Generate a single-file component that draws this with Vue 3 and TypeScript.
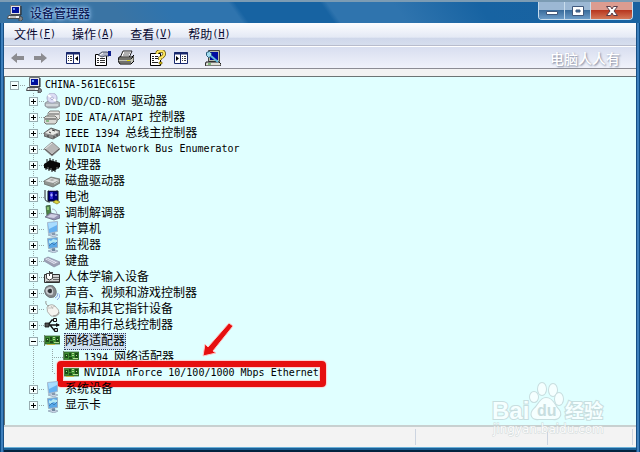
<script setup lang="ts">
import { computed, ref } from 'vue'

interface Shape {
  d: string
  fill?: string
  stroke?: string
  w?: number
}

interface Device {
  label: string
  icon: string
  focused?: boolean
  children?: Device[]
}

const icons: Record<string, Shape[]> = {
  computer: [
    { d: 'M3.500 .500h10v9h-10z', fill: '#e4e4e4', stroke: '#707478' },
    { d: 'M14 1v9H4', stroke: '#202428' },
    { d: 'M5 2h7v6H5z', fill: '#00109c' },
    { d: 'M6 3h2v2H6z', fill: '#6aa0ff' },
    { d: 'M1.500 10.500h11l1 3H.500z', fill: '#f0f0f0', stroke: '#484c50' },
    { d: 'M3 12h6', stroke: '#909090' },
    { d: 'M13 11l2 1 1 2-2 2h-2v-2z', fill: '#808488', stroke: '#303030', w: 0.6 },
  ],
  disc: [
    { d: 'M1 10l3-2h9l3 2v3l-4 2H4l-3-2z', fill: '#aeb4ba', stroke: '#7c8288', w: 0.7 },
    { d: 'M2 12h12', stroke: '#f0f4f6' },
    { d: 'M8 0a5 5 0 1 0 .1 0z', fill: '#dcdcf4', stroke: '#9ca0bc', w: 0.8 },
    { d: 'M8 5L4 2M8 5l4 3', stroke: '#fff', w: 2 },
    { d: 'M8 4a1.3 1.3 0 1 0 .1 0z', fill: '#fff', stroke: '#8c90c0', w: 0.8 },
  ],
  ide: [
    { d: 'M4 4l2-2h9l1 2v5l-2 2H5L4 9z', fill: '#e6e6e2', stroke: '#686864', w: 0.8 },
    { d: 'M5 5h10', stroke: '#585858' },
    { d: 'M0 9l2-2h9l2 2v4l-2 2H2l-2-2z', fill: '#d8d8d4', stroke: '#585854', w: 0.8 },
    { d: 'M1 10h11', stroke: '#404040' },
    { d: 'M2 12h3', stroke: '#3c9c3c' },
  ],
  drive: [
    { d: 'M0 8l7-4 9 2v4l-7 4-9-3z', fill: '#909490', stroke: '#606460', w: 0.7 },
    { d: 'M1 8l6-3 8 2-6 3z', fill: '#dedede' },
    { d: 'M5 7l3-1 3 1-3 1z', fill: '#a8aca8' },
    { d: 'M10 11l5-3', stroke: '#c8ccc8' },
  ],
  firewire: [
    { d: 'M0 8l7-5 9 3v4l-7 4-9-3z', fill: '#8c8c8c', stroke: '#505050', w: 0.8 },
    { d: 'M1 8l6-4 8 3-6 3z', fill: '#e8e8e4' },
    { d: 'M5 7l2 1M8 5l3 1M10 11v2M13 9v2M4 10v2', stroke: '#383838' },
  ],
  diamond: [
    { d: 'M0 8l8-7 8 7-8 7z', fill: '#b8b8b8', stroke: '#808080', w: 0.8 },
    { d: 'M1 8l7 6 7-6', stroke: '#505050' },
    { d: 'M1 8l7-6', stroke: '#e8e8e8' },
  ],
  chip: [
    { d: 'M0 7l6-4 10 3v4l-6 4-10-3z', fill: '#080808' },
    { d: 'M3 2v3M6 1v3M9 2v3M12 3v3M2 10v3M5 11v3M8 12v3M11 12v3M14 9v3', stroke: '#101010' },
    { d: 'M4 10v2M7 11v2M13 10v2', stroke: '#c0c8c8', w: 0.6 },
  ],
  battery: [
    { d: 'M4 2h10v10H4z', fill: '#000080', stroke: '#101018' },
    { d: 'M6 3h3v7H6z', fill: '#302ad0' },
    { d: 'M1 1v8q0 4 5 4', stroke: '#202028' },
    { d: 'M6 6h3M7.500 4.500v3M11 6h2', stroke: '#b0b0ff' },
    { d: 'M5 1h7', stroke: '#e8e8ff' },
    { d: 'M9 13l3-2 4 2-3 2z', fill: '#e0d840', stroke: '#807820', w: 0.7 },
  ],
  modem: [
    { d: 'M2 1l4-1 1 9-4 2z', fill: '#4c8448', stroke: '#385838', w: 0.7 },
    { d: 'M3 2l2 0v3H3z', fill: '#88c070' },
    { d: 'M1 12l5-4 10 2v3l-6 2z', fill: '#9494b4', stroke: '#606078', w: 0.7 },
    { d: 'M3 12l4-3 7 1-4 3z', fill: '#d0d0e4' },
    { d: 'M8 4q4 0 5 5', stroke: '#a8acc0' },
  ],
  monitor: [
    { d: 'M4 14l5-2 5 2-4 2z', fill: '#c8d4e4', stroke: '#8494ac', w: 0.6 },
    { d: 'M8 11h3v3H8z', fill: '#8498ac' },
    { d: 'M3.500 1.500l10-1v10l-9 2z', fill: '#64b0f0', stroke: '#a8b8cc' },
    { d: 'M4 2l9-1v3L5 8z', fill: '#a8dcff' },
  ],
  display: [
    { d: 'M4 14l5-2 5 2-4 2z', fill: '#c8d4e4', stroke: '#8090a8', w: 0.6 },
    { d: 'M8 11h3v3H8z', fill: '#7088a0' },
    { d: 'M3.500 1.500l10-1v10l-9 1z', fill: '#58a8e8', stroke: '#9cb0c4' },
    { d: 'M5 3l2 1 2-2 4 1v3l-4-1-2 2-2-1z', fill: '#b4e8f4' },
    { d: 'M5 9l3-3 2 2 3-3', stroke: '#3c80bc' },
  ],
  keyboard: [
    { d: 'M0 6l4-2 12 5v2l-6 3-10-6z', fill: '#9ca0b4', stroke: '#8084a0', w: 0.6 },
    { d: 'M1 6l3-1 10 4-4 2z', fill: '#e8e8f4' },
    { d: 'M3 6l8 4M5 5l8 4', stroke: '#a0a4bc', w: 0.8 },
  ],
  hid: [
    { d: 'M.500 5.500h15v8H.500z', fill: '#d0d0d0', stroke: '#303030' },
    { d: 'M9 8.500h6M9 10.500h6M2 12.500h13', stroke: '#686868' },
    { d: 'M2.500 4.500h6v5q-3 3-6 0z', fill: '#fff', stroke: '#404040' },
    { d: 'M5.500 2v5M5 3.500h4', stroke: '#404040' },
  ],
  sound: [
    { d: 'M2 2q6-4 9 1t-1 9q-5 2-8-2t0-8z', fill: '#84888c', stroke: '#606468', w: 0.8 },
    { d: 'M3 3q5-3 6 2t-2 5q-4 0-5-3t1-4z', fill: '#c8ccd0' },
    { d: 'M5 4q3-1 3 2t-3 2q-3-2 0-4z', fill: '#303438' },
    { d: 'M11 13q3-1 3-5M13 15q3-2 3-6', stroke: '#8ca4e4' },
  ],
  mouse: [
    { d: 'M3 6q4-4 8-1 5 4 4 8-3 4-8 2-5-4-4-9z', fill: '#f4f4f0', stroke: '#a0a09c', w: 0.8 },
    { d: 'M4 7q3 1 7-2M7 5l2 3', stroke: '#b4b4b0', w: 0.8 },
    { d: 'M5 5Q1 4 2 0', stroke: '#888884', w: 0.9 },
    { d: 'M9 15q5 0 6-4', stroke: '#989894', w: 1 },
  ],
  usb: [
    { d: 'M1 8h14M4 8l4-5h3M6 8l4 5h2', stroke: '#101010', w: 1.3 },
    { d: 'M1 6h4v4H1z', fill: '#505050', stroke: '#101010', w: 0.8 },
    { d: 'M9.500 1.500h3v3h-3z', fill: '#f0f0f0', stroke: '#101010' },
    { d: 'M10.500 11.500h3v3h-3z', fill: '#c0c0c0', stroke: '#101010' },
    { d: 'M12 6l4 2-4 2z', fill: '#101010' },
  ],
  network: [
    { d: 'M1 3h15v8H1z', fill: '#3c8c30', stroke: '#2c5828', w: 0.7 },
    { d: 'M2 5h3v4H2zM6 4h2v3H6zM6 8h3v2H6zM12 4h3v5h-3z', fill: '#1c4c18' },
    { d: 'M9 4.500h2M9 6.500h2M3 6.500h1M10 9.500h5M13 6.500h1', stroke: '#b0dc90' },
    { d: 'M3 11.500h8', stroke: '#c8b848' },
    { d: 'M.500 2v11', stroke: '#688868' },
  ],
  back: [{ d: 'M1 8l6-5v3h7v4H7v3z', fill: '#8c8c90' }],
  forward: [{ d: 'M14 8L8 3v3H1v4h7v3z', fill: '#8c8c90' }],
  paneLeft: [
    { d: 'M1.500 2.500h13v11h-13z', fill: '#fff', stroke: '#18286c' },
    { d: 'M1 3.500h14', stroke: '#18286c', w: 2 },
    { d: 'M8.500 4v9', stroke: '#18286c' },
    { d: 'M3 6.500h1M5 6.500h2M3 8.500h1M5 8.500h2M3 10.500h1M5 10.500h2', stroke: '#404040' },
    { d: 'M13 6v5l-3-2.500z', fill: '#000' },
  ],
  paneRight: [
    { d: 'M1.500 2.500h13v11h-13z', fill: '#fff', stroke: '#18286c' },
    { d: 'M1 3.500h14', stroke: '#18286c', w: 2 },
    { d: 'M7.500 4v9', stroke: '#18286c' },
    { d: 'M9 6.500h1M11 6.500h2M9 8.500h1M11 8.500h2M9 10.500h1M11 10.500h2', stroke: '#404040' },
    { d: 'M3 6v5l3-2.500z', fill: '#000' },
  ],
  properties: [
    { d: 'M.500 4.500h11v11H.500z', fill: '#fff', stroke: '#000' },
    { d: 'M2 8.500h2M5 8.500h5M2 10.500h2M5 10.500h5M2 12.500h2M5 12.500h5', stroke: '#303030' },
    { d: 'M3 5l4-3h5l2 1v3h-4l-3 1z', fill: '#b0b4c4', stroke: '#303848', w: 0.8 },
    { d: 'M13 1h3v5h-3z', fill: '#10208c' },
    { d: 'M5 5l3-2', stroke: '#fff' },
  ],
  printer: [
    { d: 'M5 1h9l-3 7H2z', fill: '#fff', stroke: '#202020' },
    { d: 'M6 3h6M5 5h6', stroke: '#606060' },
    { d: 'M1 7h13l2-2v6l-3 3H2l-2-3z', fill: '#c4c4b8', stroke: '#000' },
    { d: 'M1 9h12l2-2M1 12h12', stroke: '#202020' },
    { d: 'M9 10.500h3', stroke: '#e8e000' },
  ],
  help: [
    { d: 'M.500 3.500h10v12H.500z', fill: '#fff', stroke: '#000' },
    { d: 'M2 6.500h2M5 6.500h3M2 8.500h2M5 8.500h3M2 10.500h2M2 12.500h6', stroke: '#202020' },
    { d: 'M7 4q0-3 4-3t3 4q-1 2-4 3v2', stroke: '#605000', w: 3.4 },
    { d: 'M7 4q0-3 4-3t3 4q-1 2-4 3v2', stroke: '#ffe860', w: 2 },
    { d: 'M9 12h3v2H9z', fill: '#f0d020', stroke: '#605000', w: 0.6 },
  ],
  scan: [
    { d: 'M3.500 .500h11v11h-11z', fill: '#b8bcac', stroke: '#484848' },
    { d: 'M5 2h8v8H5z', fill: '#000ca0' },
    { d: 'M1 12h13l2 2v2H0z', fill: '#e0e0d8', stroke: '#181818' },
    { d: 'M1.500 2.500l3-1 2 2v3l-3 1-2-2z', fill: '#a0dcf0', stroke: '#285c78' },
    { d: 'M6 6l7 6', stroke: '#60b8dc', w: 2 },
    { d: 'M3 14h3', stroke: '#209020' },
  ],
}

const devices: Device[] = [
  { label: 'DVD/CD-ROM 驱动器', icon: 'disc' },
  { label: 'IDE ATA/ATAPI 控制器', icon: 'ide' },
  { label: 'IEEE 1394 总线主控制器', icon: 'firewire' },
  { label: 'NVIDIA Network Bus Enumerator', icon: 'diamond' },
  { label: '处理器', icon: 'chip' },
  { label: '磁盘驱动器', icon: 'drive' },
  { label: '电池', icon: 'battery' },
  { label: '调制解调器', icon: 'modem' },
  { label: '计算机', icon: 'monitor' },
  { label: '监视器', icon: 'display' },
  { label: '键盘', icon: 'keyboard' },
  { label: '人体学输入设备', icon: 'hid' },
  { label: '声音、视频和游戏控制器', icon: 'sound' },
  { label: '鼠标和其它指针设备', icon: 'mouse' },
  { label: '通用串行总线控制器', icon: 'usb' },
  {
    label: '网络适配器',
    icon: 'network',
    focused: true,
    children: [
      { label: '1394 网络适配器', icon: 'network' },
      { label: 'NVIDIA nForce 10/100/1000 Mbps Ethernet', icon: 'network', focused: true },
    ],
  },
  { label: '系统设备', icon: 'monitor' },
  { label: '显示卡', icon: 'display' },
]

const menus = [
  { label: '文件', key: 'F' },
  { label: '操作', key: 'A' },
  { label: '查看', key: 'V' },
  { label: '帮助', key: 'H' },
]

const toolGroups = [
  [{ icon: 'back', name: '后退' }, { icon: 'forward', name: '前进' }],
  [{ icon: 'paneLeft', name: '显示控制台树' }],
  [{ icon: 'properties', name: '属性' }, { icon: 'printer', name: '打印' }],
  [{ icon: 'help', name: '帮助' }, { icon: 'paneRight', name: '显示操作窗格' }],
  [{ icon: 'scan', name: '扫描硬件改动' }],
]

const rootOpen = ref(true)
const open = ref<Record<string, boolean>>({ 网络适配器: true })
const shown = computed(() => (rootOpen.value ? devices : []))

function toggle(label: string) {
  open.value[label] = !open.value[label]
}

// Splits a label so that Han text and Latin text can each take their own size.
function runs(label: string) {
  return (label.match(/[\x00-\x7f]+|[^\x00-\x7f]+/g) ?? []).map((text) => ({
    text,
    wide: text.charCodeAt(0) > 127,
  }))
}
</script>

<template>
  <div class="window">
    <header class="title">
      <svg class="icon" viewBox="0 0 16 16" aria-hidden="true">
        <path v-for="(s, i) in icons.computer" :key="i" :d="s.d" :fill="s.fill ?? 'none'" :stroke="s.stroke" :stroke-width="s.w" />
      </svg>
      <h1>设备管理器</h1>
      <div class="controls">
        <button type="button" aria-label="最小化">
          <svg viewBox="0 0 14 12"><path d="M1.500 6.500h11v3h-11z" fill="#fff" stroke="#40587c" /></svg>
        </button>
        <button type="button" aria-label="最大化">
          <svg viewBox="0 0 14 12"><path d="M1.500 1.500h11v9h-11zM5 5h4v2H5z" fill="#fff" fill-rule="evenodd" stroke="#40587c" /></svg>
        </button>
        <button type="button" class="close" aria-label="关闭">
          <svg viewBox="0 0 14 12"><path d="M1.500 1.500h4L7 4l1.500-2.500h4L9 6l3.500 4.500h-4L7 8l-1.500 2.500h-4L5 6z" fill="#fff" stroke="#583c48" /></svg>
        </button>
      </div>
    </header>

    <div class="client">
      <nav class="menu">
        <button v-for="m in menus" :key="m.key" type="button">{{ m.label }}<span class="key">(<u>{{ m.key }}</u>)</span></button>
      </nav>
      <div class="toolbar">
        <div v-for="(group, g) in toolGroups" :key="g" class="group">
          <button v-for="t in group" :key="t.icon" type="button" :aria-label="t.name">
            <svg class="icon" viewBox="0 0 16 16">
              <path v-for="(s, i) in icons[t.icon]" :key="i" :d="s.d" :fill="s.fill ?? 'none'" :stroke="s.stroke" :stroke-width="s.w" />
            </svg>
          </button>
        </div>
        <span class="signature">电脑人人有</span>
      </div>

      <main class="tree">
        <div class="row root">
          <button type="button" class="box" :class="{ plus: !rootOpen }" aria-label="展开或折叠" @click="rootOpen = !rootOpen"></button>
          <i class="dots"></i>
          <svg class="icon" viewBox="0 0 16 16">
            <path v-for="(s, i) in icons.computer" :key="i" :d="s.d" :fill="s.fill ?? 'none'" :stroke="s.stroke" :stroke-width="s.w" />
          </svg>
          <span class="label">CHINA-561EC615E</span>
        </div>
        <ul class="branch">
          <li v-for="d in shown" :key="d.label">
            <div class="row">
              <button type="button" class="box" :class="{ plus: !open[d.label] }" :aria-label="d.label" @click="toggle(d.label)"></button>
              <i class="dots"></i>
              <svg class="icon" viewBox="0 0 16 16">
                <path v-for="(s, i) in icons[d.icon]" :key="i" :d="s.d" :fill="s.fill ?? 'none'" :stroke="s.stroke" :stroke-width="s.w" />
              </svg>
              <span class="label" :class="{ selected: d.focused }"><span v-for="(r, i) in runs(d.label)" :key="i" :class="{ wide: r.wide }">{{ r.text }}</span></span>
            </div>
            <ul v-if="d.children && open[d.label]" class="leaves">
              <li v-for="c in d.children" :key="c.label" class="row">
                <i class="dots"></i>
                <svg class="icon" viewBox="0 0 16 16">
                  <path v-for="(s, i) in icons[c.icon]" :key="i" :d="s.d" :fill="s.fill ?? 'none'" :stroke="s.stroke" :stroke-width="s.w" />
                </svg>
                <span class="label"><span v-for="(r, i) in runs(c.label)" :key="i" :class="{ wide: r.wide }">{{ r.text }}</span></span>
                <span v-if="c.focused" class="callout">
                  <svg class="arrow" viewBox="0 0 32 36" aria-hidden="true">
                    <path d="M1 34L3 22l3 3L27 1l4 3-20 25 3 2z" fill="#e60f0f" stroke="#ffc8c8" />
                  </svg>
                </span>
              </li>
            </ul>
          </li>
        </ul>
      </main>

      <footer class="status"><span></span><span></span><span></span></footer>
    </div>

    <div class="watermark">
      <svg viewBox="0 0 116 54" role="img" aria-label="Baidu 经验">
        <g fill="#fbffff" stroke="#c2d6d8" stroke-width="2" paint-order="stroke">
          <ellipse cx="42" cy="12" rx="4" ry="5" />
          <ellipse cx="50" cy="4" rx="4" ry="6" />
          <ellipse cx="61" cy="5" rx="4" ry="6" />
          <ellipse cx="67" cy="14" rx="4" ry="6" />
          <path d="M54 13c7 0 9 8 12 11 5 5 1 11-5 10h-14c-7 1-10-5-5-10 5-4 6-11 12-11z" />
          <text x="0" y="34" class="latin">Bai</text>
          <text x="73" y="33" class="han">经验</text>
        </g>
        <text x="45" y="31" class="du">du</text>
        <text x="1" y="48" class="url">jingyan.baidu.com</text>
      </svg>
    </div>
  </div>
</template>

<style>
body {
  margin: 0;
}
</style>

<style scoped>
.window {
  position: relative;
  box-sizing: border-box;
  min-height: 100vh;
  display: flex;
  flex-direction: column;
  padding: 0 4px 5px;
  background: linear-gradient(90deg, #0d4c86 0 1px, #3d7fbc 1px 3px, #174f84 3px 4px, transparent 4px calc(100% - 4px), #174f84 calc(100% - 4px) calc(100% - 3px), #3d7fbc calc(100% - 3px) calc(100% - 1px), #0d4c86 calc(100% - 1px)), linear-gradient(0deg, #03233f 0 2px, #1b6096 2px 4px, #6ab0d8 4px 5px, #1763a2 5px);
  font-family: "Noto Sans CJK SC", sans-serif;
  font-size: 12px;
  color: #000;
}
button {
  margin: 0;
  padding: 0;
  border: 0;
  background: none;
  color: inherit;
  font: inherit;
}
.icon {
  display: block;
  flex: none;
  width: 16px;
  height: 16px;
}
.title {
  display: flex;
  align-items: center;
  gap: 7px;
  height: 23px;
  box-sizing: border-box;
  margin: 0 -4px;
  padding: 2px 7px 0;
  background: linear-gradient(180deg, #7c9cb4 0 2px, transparent 2px), linear-gradient(55deg, #3a74a4 0 19%, #2f74ae 27%, #2f74ae 37%, #1763a2 38% 51%, #2f74ae 52% 62%, #1763a2 75%, #1a62a0 100%);
}
h1 {
  flex: 1;
  margin: 0;
  font-size: 12px;
  line-height: 20px;
  font-weight: 400;
  color: #000848;
  text-shadow: 0 0 3px #a8d0f8, 0 0 4px #a8d0f8, 0 0 6px #8cbcec;
}
.controls {
  display: flex;
  align-self: flex-start;
  border: 1px solid #c8dcec;
  border-top: 0;
  border-radius: 0 0 4px 4px;
  overflow: hidden;
}
.controls button {
  display: grid;
  place-items: center;
  width: 26px;
  height: 17px;
  border-right: 1px solid #c8dcec;
  background: linear-gradient(#9cb8d4 0 45%, #3a6c9c 50%, #6c9cc8);
}
.controls svg {
  width: 14px;
  height: 12px;
}
.controls .close {
  width: 41px;
  border-right: 0;
  background: linear-gradient(#dc9c90 0 45%, #b83820 50%, #d47858);
}
.client {
  flex: 1;
  display: flex;
  flex-direction: column;
}
.menu {
  display: flex;
  gap: 16px;
  height: 22px;
  padding: 0 10px;
  border-bottom: 1px solid #b8bccc;
  background: linear-gradient(#fcfdff, #e4e9f5 65%, #cfd7ea 68%, #d6deee);
}
.menu button {
  display: flex;
  align-items: center;
  line-height: 22px;
  color: #080830;
}
.key {
  font-family: "DejaVu Sans Mono", monospace;
  font-size: 10px;
}
.toolbar {
  display: flex;
  align-items: center;
  gap: 16px;
  height: 21px;
  padding: 0 16px 0 6px;
  border-top: 1px solid #fff;
  border-bottom: 1px solid #8c8c94;
  background: linear-gradient(#d8def0, #f0f2fa);
}
.group {
  display: flex;
  gap: 7px;
}
.group:nth-child(3) {
  margin-left: -2px;
}
.signature {
  margin-left: auto;
  font-size: 14px;
  font-weight: 500;
  line-height: 20px;
  color: #fff;
  text-shadow: 1px 1px 2px #788098;
}
.tree {
  flex: 1;
  margin-top: 7px;
  border-top: 1px solid #6c7474;
  border-left: 1px solid #6c7474;
  background: #e0ffff;
  box-shadow: 0 -7px #f2f2f2;
}
.row {
  position: relative;
  display: flex;
  align-items: center;
  height: 16px;
}
.root {
  padding-left: 5px;
}
ul {
  margin: 0;
  padding: 0;
  list-style: none;
}
.branch,
.leaves {
  padding-left: 24px;
  background: repeating-linear-gradient(#98a8a8 0 1px, transparent 1px 2px) no-repeat;
  background-size: 1px calc(100% - 8px);
}
.branch {
  background-position: 28px 0;
}
.leaves {
  background-position: 23px 0;
}
.box {
  flex: none;
  width: 9px;
  height: 9px;
  border: 1px solid #98acb0;
  background: linear-gradient(#000, #000) center / 5px 1px no-repeat #f4ffff;
}
.box.plus {
  background: linear-gradient(#000, #000) center / 5px 1px no-repeat, linear-gradient(#000, #000) center / 1px 5px no-repeat, #f4ffff;
}
.dots {
  flex: none;
  width: 6px;
  height: 1px;
  background: repeating-linear-gradient(90deg, transparent 0 1px, #98a8a8 1px 2px);
}
.root .dots {
  width: 7px;
}
.leaves .dots {
  width: 10px;
}
.label {
  margin-left: 4px;
  padding: 0 1px;
  font-family: "DejaVu Sans Mono", monospace;
  font-size: 10px;
  line-height: 16px;
  white-space: pre;
}
.root .label {
  margin-left: 2px;
}
.wide {
  font-family: "Noto Sans CJK SC", sans-serif;
  font-size: 12px;
  line-height: 14px;
}
.selected {
  outline: 1px dotted #304060;
  outline-offset: -1px;
  background: #cfe0f0;
}
.callout {
  position: absolute;
  inset: -4px auto -6px 4px;
  width: 257px;
  border: 6px solid #e60f0f;
  border-radius: 4px;
  box-shadow: 0 0 1px 1px #ffd0d0, inset 0 0 1px 1px #ffd0d0;
}
.arrow {
  position: absolute;
  left: 139px;
  top: -45px;
  width: 32px;
  height: 36px;
}
.status {
  display: flex;
  align-items: center;
  height: 20px;
  padding-right: 3px;
  border-top: 2px solid #c8d0d0;
  background: #f3f3f3;
}
.status span {
  height: 16px;
  border-right: 1px solid #ccd4e0;
}
.status span:nth-child(1) {
  flex: 1;
}
.status span:nth-child(2) {
  width: 131px;
}
.status span:nth-child(3) {
  width: 84px;
}
.watermark {
  position: absolute;
  right: 32px;
  bottom: 13px;
  pointer-events: none;
}
.watermark svg {
  display: block;
  width: 116px;
  height: 54px;
  overflow: visible;
  opacity: 0.8;
}
.latin {
  font: 700 24px "Liberation Sans", sans-serif;
}
.han {
  font: 700 19px "Noto Sans CJK SC", sans-serif;
}
.du {
  font: 700 16px "Liberation Sans", sans-serif;
  fill: #c2d6d8;
}
.url {
  font: 12px "DejaVu Sans", sans-serif;
  fill: #fff;
  stroke: #c8d4d4;
  stroke-width: 1px;
  paint-order: stroke;
}
</style>
